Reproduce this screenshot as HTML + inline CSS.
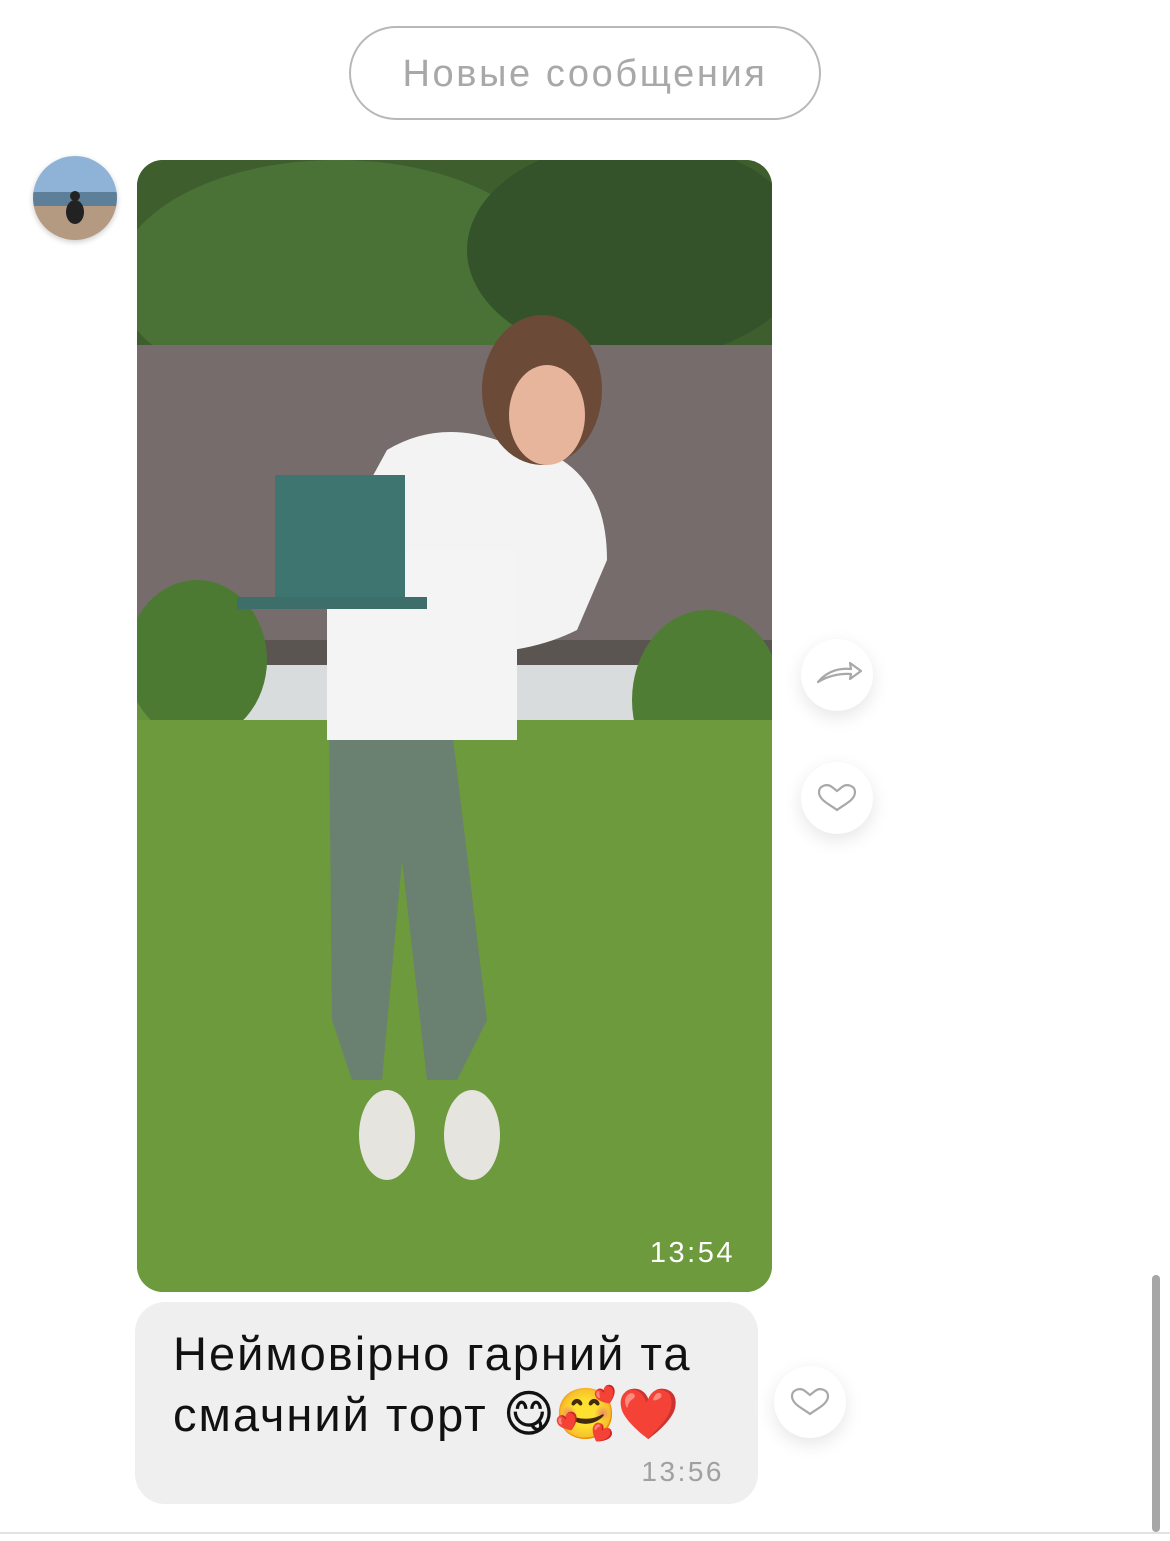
<!DOCTYPE html>
<html><head><meta charset="utf-8"><style>
html,body{margin:0;padding:0;background:#fff;width:1170px;height:1541px;overflow:hidden;position:relative;font-family:"Liberation Sans","DejaVu Sans",sans-serif}
.pill{position:absolute;left:349px;top:26px;width:472px;height:94px;border:2px solid #b8b8b8;border-radius:48px;box-sizing:border-box;text-align:center;line-height:92px;font-size:38px;letter-spacing:2.6px;color:#a8a8a8}
.av{position:absolute;left:33px;top:156px;width:84px;height:84px;border-radius:50%;overflow:hidden;box-shadow:0 2px 6px rgba(0,0,0,.2)}
.photo{position:absolute;left:137px;top:160px;width:635px;height:1132px;border-radius:26px;overflow:hidden}
.btn{position:absolute;width:72px;height:72px;border-radius:50%;background:#fff;box-shadow:0 6px 18px rgba(0,0,0,.1)}
.bubble{position:absolute;left:135px;top:1302px;width:623px;height:202px;background:#efefef;border-radius:30px}
.txt{position:absolute;left:38px;top:22px;font-size:47px;letter-spacing:2px;line-height:60px;color:#111;white-space:nowrap}
.em{font-size:50px;letter-spacing:0}
.tm{position:absolute;right:34px;bottom:16px;font-size:28px;letter-spacing:2.5px;color:#a0a0a0}
.sb{position:absolute;left:1152px;top:1275px;width:8px;height:257px;background:#a6a6a6;border-radius:4px}
.line{position:absolute;left:0;top:1532px;width:1170px;height:2px;background:#e2e2e2}
</style></head><body>
<div class="pill">Новые сообщения</div>
<div class="av"><svg width="84" height="84"><rect width="84" height="40" fill="#8fb3d6"/><rect y="36" width="84" height="14" fill="#5d7f9a"/><rect y="50" width="84" height="34" fill="#b59a82"/><ellipse cx="42" cy="56" rx="9" ry="12" fill="#222"/><circle cx="42" cy="40" r="5" fill="#222"/></svg></div>
<div class="photo"><svg width="635" height="1132" viewBox="0 0 635 1132">
<defs><linearGradient id="g" x1="0" y1="0" x2="0" y2="1"><stop offset="0" stop-color="#5f8a3a"/><stop offset="1" stop-color="#6f9a3e"/></linearGradient></defs>
<rect width="635" height="1132" fill="url(#g)"/>
<rect width="635" height="220" fill="#3e5f2d"/>
<ellipse cx="200" cy="120" rx="220" ry="120" fill="#4a7236"/>
<ellipse cx="500" cy="90" rx="170" ry="110" fill="#35532a"/>
<rect y="185" width="635" height="305" fill="#766c6c"/>
<rect y="480" width="635" height="60" fill="#5b5552"/>
<rect x="30" y="505" width="605" height="60" fill="#d8dcdc"/>
<ellipse cx="60" cy="500" rx="70" ry="80" fill="#4c7a32"/>
<ellipse cx="570" cy="540" rx="75" ry="90" fill="#4f7d33"/>
<rect y="560" width="635" height="572" fill="#6c9a3c"/>
<path d="M250 290 Q300 260 360 280 Q470 290 470 400 L440 470 Q380 500 300 490 L190 400 Z" fill="#f3f3f3"/>
<path d="M192 560 L300 560 L315 570 L350 860 L320 920 L290 920 L265 700 L245 920 L215 920 L195 860 Z" fill="#6a8070"/>
<path d="M190 390 L380 390 L380 580 L190 580 Z" fill="#f4f4f4"/>
<rect x="138" y="315" width="130" height="125" fill="#3f7570"/>
<rect x="100" y="437" width="190" height="12" fill="#3d6e6a"/>
<ellipse cx="405" cy="230" rx="60" ry="75" fill="#6b4a38"/>
<ellipse cx="410" cy="255" rx="38" ry="50" fill="#e7b59c"/>
<ellipse cx="250" cy="975" rx="28" ry="45" fill="#e6e4df"/>
<ellipse cx="335" cy="975" rx="28" ry="45" fill="#e6e4df"/>
<text x="598" y="1102" text-anchor="end" font-size="29" letter-spacing="2.5" fill="#fff" font-family="Liberation Sans">13:54</text>
</svg></div>
<div class="btn" style="left:801px;top:639px"><svg width="72" height="72"><path d="M17 43 Q30 28 50 30 L49 24 L60 32 L49 40 L50 35 Q32 34 17 43 Z" fill="none" stroke="#a8a8a8" stroke-width="2.2" stroke-linejoin="round"/></svg></div>
<div class="btn" style="left:801px;top:762px"><svg width="72" height="72"><path d="M36 48 C28 42 18 38 18 30 C18 24 26 21 31 25 L36 29 L41 25 C46 21 54 24 54 30 C54 38 44 42 36 48 Z" fill="none" stroke="#a8a8a8" stroke-width="2.2"/></svg></div>
<div class="bubble"><div class="txt">Неймовірно гарний та<br>смачний торт <span class="em">😋🥰❤️</span></div><div class="tm">13:56</div></div>
<div class="btn" style="left:774px;top:1366px"><svg width="72" height="72"><path d="M36 48 C28 42 18 38 18 30 C18 24 26 21 31 25 L36 29 L41 25 C46 21 54 24 54 30 C54 38 44 42 36 48 Z" fill="none" stroke="#a8a8a8" stroke-width="2.2"/></svg></div>
<div class="sb"></div><div class="line"></div>
</body></html>
